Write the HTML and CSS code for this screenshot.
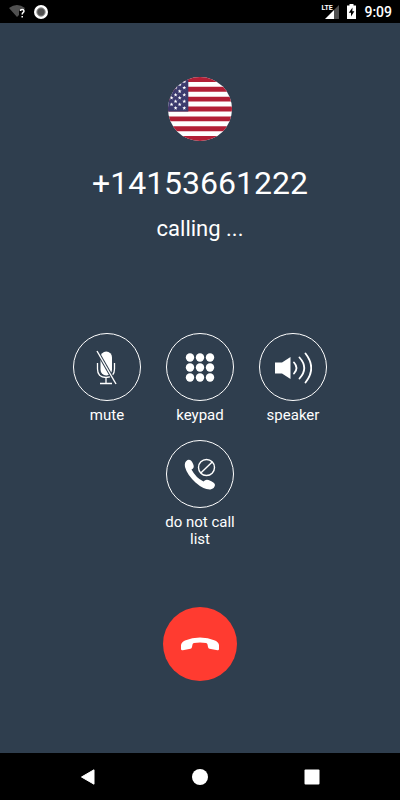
FILE: index.html
```html
<!DOCTYPE html>
<html lang="en">

<head>
    <meta charset="UTF-8">
    <meta name="viewport" content="width=device-width, initial-scale=1.0">
    <title>Calling</title>
    <link rel="stylesheet" href="styles.css">
</head>

<body>

    <header class="status-bar">
        <div class="status-group">
            <svg width="18" height="15" viewBox="0 0 18 15" aria-hidden="true">
                <path d="M1 4Q9 -2 17 4L15.5 6H11V11L9 13Z" fill="#505050"/>
                <path d="M12.3 7Q12.4 5.5 14.2 5.5Q16 5.5 16 7Q16 8 15 8.7Q14.2 9.3 14.2 10.5M14.2 12V13.6" fill="none" stroke="#fff" stroke-width="1.5"/>
            </svg>
            <svg width="14" height="14" viewBox="0 0 14 14" aria-hidden="true">
                <circle cx="7" cy="7" r="7" fill="#fff"/>
                <circle cx="7" cy="7" r="4.2" fill="#505050" stroke="#999" stroke-width="1"/>
            </svg>
        </div>
        <div class="status-group">
            <div class="signal">
                <svg width="14" height="14" viewBox="0 0 14 14" aria-hidden="true">
                    <path d="M14 0V14H9V5Z" fill="#505050"/>
                    <path d="M9 5V14H0Z" fill="#fff"/>
                </svg>
                <span class="lte">LTE</span>
            </div>
            <svg width="9" height="15" viewBox="0 0 9 15" aria-hidden="true">
                <path d="M0 1.5H2.5V0H6.5V1.5H9V15H0Z" fill="#fff"/>
                <path d="M5.5 3.5L1.8 8.7H4V12.5L7.4 7.3H5.3Z" fill="#000"/>
            </svg>
            <time class="clock">9:09</time>
        </div>
    </header>

    <main class="call">
        <svg class="flag" viewBox="0 0 63 63" role="img" aria-label="United States">
            <defs>
                <clipPath id="round"><circle cx="31.5" cy="31.5" r="31.5"/></clipPath>
                <path id="star" d="M0 -2L.5 -.6H1.9L.8 .3L1.2 1.7L0 .9L-1.2 1.7L-.8 .3L-1.9 -.6H-.5Z" fill="#fff"/>
            </defs>
            <g clip-path="url(#round)">
                <rect width="63" height="63" fill="#fff"/>
                <path d="M0 2.4H63M0 12.1H63M0 21.8H63M0 31.5H63M0 41.2H63M0 50.9H63M0 60.6H63" stroke="#b21f36" stroke-width="4.85"/>
                <rect width="20" height="34" fill="#3c3b6e"/>
                <use href="#star" x="16" y="4.5"/>
                <use href="#star" x="11.5" y="7.5"/>
                <use href="#star" x="16" y="10.5"/>
                <use href="#star" x="7.5" y="10.5"/>
                <use href="#star" x="11.5" y="14"/>
                <use href="#star" x="2.5" y="14"/>
                <use href="#star" x="16" y="17.5"/>
                <use href="#star" x="7.5" y="17.5"/>
                <use href="#star" x="11.5" y="20.5"/>
                <use href="#star" x="3.5" y="20.5"/>
                <use href="#star" x="16" y="24"/>
                <use href="#star" x="7.5" y="24"/>
                <use href="#star" x="11.5" y="27"/>
                <use href="#star" x="3.5" y="27"/>
                <use href="#star" x="16" y="30.5"/>
                <use href="#star" x="7.5" y="30.5"/>
            </g>
        </svg>
        <h1 class="number">+14153661222</h1>
        <p class="state">calling ...</p>

        <div class="actions">
            <button class="action" type="button">
                <span class="action-icon">
                    <svg width="34" height="36" viewBox="0 0 34 36" fill="none" stroke="#fff" aria-hidden="true">
                        <rect x="10.5" y="2.5" width="11.5" height="24" rx="5.7" fill="#fff" stroke="none"/>
                        <path d="M7.5 14V20Q7.5 28.5 16 28.5Q24.5 28.5 24.5 20V14M16 28.5V34.5M10 34.5H22" stroke-width="1.3"/>
                        <path d="M7 2L26 35" stroke="#2f3e4e" stroke-width="3.4"/>
                        <path d="M7 2L26 35" stroke-width="1.4"/>
                    </svg>
                </span>
                <span class="action-label">mute</span>
            </button>
            <button class="action" type="button">
                <span class="action-icon">
                    <svg width="30" height="30" viewBox="0 0 30 30" fill="#fff" aria-hidden="true">
                        <circle cx="5" cy="5.5" r="4.2"/>
                        <circle cx="15" cy="5.5" r="4.2"/>
                        <circle cx="25" cy="5.5" r="4.2"/>
                        <circle cx="5" cy="15.5" r="4.2"/>
                        <circle cx="15" cy="15.5" r="4.2"/>
                        <circle cx="25" cy="15.5" r="4.2"/>
                        <circle cx="5" cy="25.5" r="4.2"/>
                        <circle cx="15" cy="25.5" r="4.2"/>
                        <circle cx="25" cy="25.5" r="4.2"/>
                    </svg>
                </span>
                <span class="action-label">keypad</span>
            </button>
            <button class="action" type="button">
                <span class="action-icon">
                    <svg width="38" height="34" viewBox="0 0 38 34" aria-hidden="true">
                        <path d="M1 12.5H8L16.5 7V29L8 23.5H1Z" fill="#fff"/>
                        <path d="M20 12.5Q25 18 20 23.5M25.5 7.5Q35 18 25.5 28.5M31.5 3.5Q43 18 31.5 32.5" fill="none" stroke="#fff" stroke-width="1.8" stroke-linecap="round"/>
                    </svg>
                </span>
                <span class="action-label">speaker</span>
            </button>
            <button class="action" type="button">
                <span class="action-icon">
                    <svg width="32" height="32" viewBox="0 0 32 32" aria-hidden="true">
                        <path d="M3.5 2Q7.5 1 9.5 7Q10.5 10 7.5 11.5Q12 20 19.5 23.5Q21.5 21 24.5 22Q31 24.5 31 27Q30.5 30.5 26.5 31.5Q20 32 11.5 24.5Q3 16.5 1 9Q0 4 3.5 2Z" fill="#fff"/>
                        <path d="M16.8 15L28.2 4" stroke="#fff" stroke-width="1.4"/>
                        <circle cx="22.5" cy="9.5" r="8" fill="none" stroke="#fff" stroke-width="1.4"/>
                    </svg>
                </span>
                <span class="action-label">do not call list</span>
            </button>
        </div>

        <button class="hang-up" type="button" aria-label="Hang up">
            <svg width="38" height="14" viewBox="0 0 38 14" aria-hidden="true">
                <path d="M0 8.5Q0 5.5 4 3.5Q11 .5 19 .5Q27 .5 34 3.5Q38 5.5 38 8.5V12Q38 13.5 36.5 13.3L28.5 11.8Q27.3 11.5 27 10L26.5 7.5Q26.3 6.2 25 6Q19 5 13 6Q11.7 6.2 11.5 7.5L11 10Q10.7 11.5 9.5 11.8L1.8 13.3Q0 13.5 0 12Z" fill="#fff"/>
            </svg>
        </button>
    </main>

    <nav class="nav-bar">
        <button class="nav-button" type="button" aria-label="Back">
            <svg width="16" height="16" viewBox="0 0 16 16"><path d="M14 .8V15.2L1.5 8Z" fill="#fff" stroke="#fff" stroke-linejoin="round"/></svg>
        </button>
        <button class="nav-button" type="button" aria-label="Home">
            <svg width="16" height="16" viewBox="0 0 16 16"><circle cx="8" cy="8" r="8" fill="#fff"/></svg>
        </button>
        <button class="nav-button" type="button" aria-label="Recent apps">
            <svg width="16" height="16" viewBox="0 0 16 16"><rect x=".5" y=".5" width="15" height="15" rx="1" fill="#fff"/></svg>
        </button>
    </nav>

</body>

</html>
```
FILE: styles.css
```css
* {
    margin: 0;
    padding: 0;
    box-sizing: border-box;
}

body {
    display: flex;
    flex-direction: column;
    min-height: 100vh;
    font-family: Roboto, sans-serif;
    background-color: #000;
    color: #fff;
}

button {
    background: none;
    border: none;
    color: inherit;
    font: inherit;
    cursor: pointer;
}

svg {
    display: block;
}

.status-bar {
    display: flex;
    justify-content: space-between;
    align-items: center;
    height: 23px;
    padding: 0 8px;
}

.status-group {
    display: flex;
    align-items: center;
    gap: 8px;
}

.signal {
    position: relative;
}

.lte {
    position: absolute;
    top: -1px;
    left: -4px;
    font-size: 7px;
    font-weight: 700;
    line-height: 8px;
}

.clock {
    font-size: 14px;
    font-weight: 500;
    line-height: 24px;
}

.call {
    flex: 1;
    display: flex;
    flex-direction: column;
    align-items: center;
    padding: 54px 16px 72px;
    background-color: #2f3e4e;
}

.flag {
    width: 64px;
    height: 64px;
}

.number {
    margin-top: 22px;
    font-size: 32px;
    font-weight: 400;
    line-height: 40px;
}

.state {
    margin-top: 12px;
    font-size: 22px;
    line-height: 28px;
}

.actions {
    display: flex;
    flex-wrap: wrap;
    justify-content: center;
    gap: 16px 13px;
    max-width: 280px;
    margin-top: 90px;
}

.action {
    display: flex;
    flex-direction: column;
    align-items: center;
    gap: 6px;
    width: 80px;
}

.action-icon {
    display: flex;
    justify-content: center;
    align-items: center;
    width: 68px;
    height: 68px;
    border: 1px solid #fff;
    border-radius: 50%;
}

.action-label {
    font-size: 15px;
    line-height: 17px;
}

.hang-up {
    display: flex;
    justify-content: center;
    align-items: center;
    width: 74px;
    height: 74px;
    margin-top: auto;
    background-color: #ff3b30;
    border-radius: 50%;
}

.nav-bar {
    display: flex;
    justify-content: space-between;
    height: 47px;
    padding: 0 64px;
}

.nav-button {
    display: flex;
    justify-content: center;
    align-items: center;
    width: 48px;
}
```
